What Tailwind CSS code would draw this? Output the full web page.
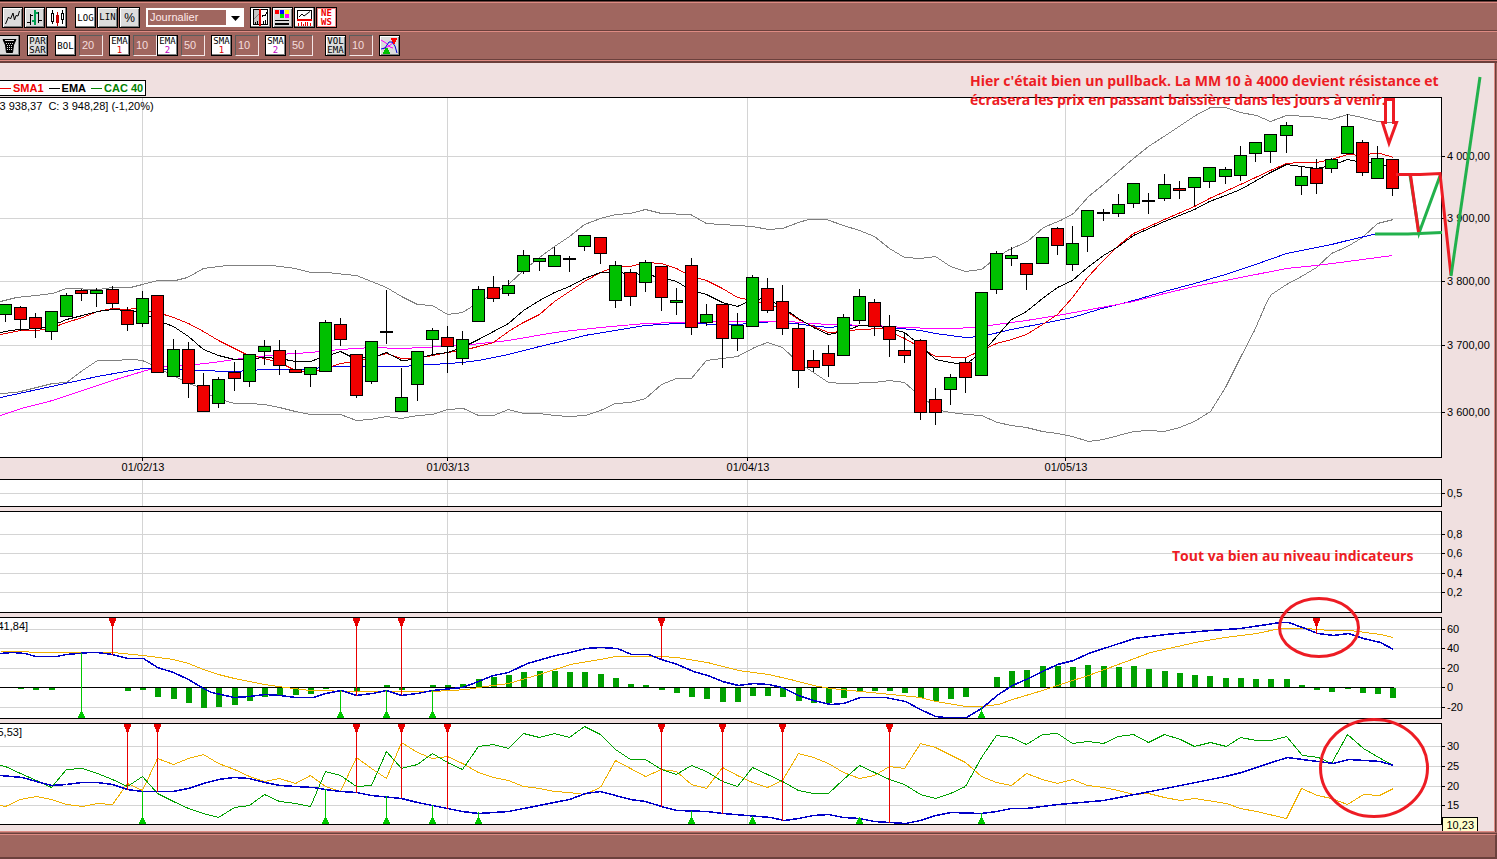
<!DOCTYPE html>
<html lang="fr">

<head>
    <meta charset="UTF-8" />
    <meta name="viewport" content="width=device-width, initial-scale=1.0" />
    <title>CAC 40 - Journalier</title>
    <script src="https://cdn.jsdelivr.net/npm/@tailwindcss/browser@4"></script>
</head>

<body class="flex min-h-screen flex-col overflow-x-hidden bg-[#a0665f] font-['Liberation_Sans',sans-serif] text-[11px] text-black">

<!-- Toolbars -->
<header class="border-t border-black bg-[#6b403c] pt-px">
    <div class="flex h-[29px] items-center border-t border-b border-t-[#de8b83] border-b-[#6b403c] bg-[#a0665f] pt-0.5 pl-0.5">
        <div class="flex gap-px">
            <button aria-label="Courbe" class="h-[21px] w-[21px] border border-black bg-[#dcdcdc] shadow-[inset_1px_1px_0_#fff,inset_-1px_-1px_0_#808080]">
                <svg width="19" height="19" fill="none" stroke="#000"><path d="M2.5 16L5.5 9L7.5 11L10 5L11.500 12L13 7.500L15 8L16.500 3" /></svg>
            </button>
            <button aria-label="Bar chart" class="h-[21px] w-[21px] border border-black bg-[#dcdcdc] shadow-[inset_1px_1px_0_#fff,inset_-1px_-1px_0_#808080]">
                <svg width="19" height="19" fill="none" stroke="#000" shape-rendering="crispEdges"><path d="M2 14.500h3M5.500 6v11M6 7.500h2M13.500 4v11M11 5.500h2M14 12.500h3" /><path d="M10 2v15M7 12.500h2M11 4.500h2" stroke="#00a050" stroke-width="2" /></svg>
            </button>
            <button aria-label="Chandeliers" class="h-[21px] w-[21px] border border-black bg-white shadow-[inset_-1px_-1px_0_#808080]">
                <svg width="19" height="19" fill="#fff" stroke="#000" shape-rendering="crispEdges"><path d="M5.500 2v14M15.500 2v14" /><rect x="4.500" y="5.500" width="2" height="8" /><rect x="14.500" y="5.500" width="2" height="6" /><path d="M10.500 4v14" stroke="#c00000" /><rect x="9.500" y="7.500" width="2" height="7" fill="#e00000" stroke="#c00000" /></svg>
            </button>
        </div>
        <div class="ml-2 flex gap-px font-['DejaVu_Sans_Mono',monospace] text-[9px]">
            <button class="h-[21px] w-[21px] border border-black bg-white pt-0.5 shadow-[inset_-1px_-1px_0_#808080]">LOG</button>
            <button class="h-[21px] w-[21px] border border-black bg-[#dcdcdc] shadow-[inset_1px_1px_0_#fff,inset_-1px_-1px_0_#808080]">LIN</button>
            <button class="h-[21px] w-[21px] border border-black bg-[#dcdcdc] font-['Liberation_Sans',sans-serif] text-[12px] shadow-[inset_1px_1px_0_#fff,inset_-1px_-1px_0_#808080]">%</button>
        </div>
        <div class="relative ml-1.5 h-[19px] w-[98px]">
            <select aria-label="Période" class="h-[19px] w-[98px] appearance-none border-2 border-r-[18px] border-white bg-[#a0665f] pl-0.5 leading-none text-[#ffe8e8]">
                <option>Journalier</option>
                <option>Hebdomadaire</option>
                <option>Mensuel</option>
            </select>
            <svg class="pointer-events-none absolute top-2 right-1" width="9" height="5"><path d="M0 0h9L4.500 5z" /></svg>
        </div>
        <div class="ml-1.5 flex gap-px">
            <button aria-label="Curseur" class="h-[21px] w-[21px] border border-black bg-white shadow-[inset_-1px_-1px_0_#808080]">
                <svg width="19" height="19" fill="none" stroke="#000" shape-rendering="crispEdges"><rect x="2.500" y="1.500" width="6" height="15" fill="#c4c4c4" /><rect x="2.500" y="1.500" width="14" height="15" /><path d="M3 11L8 6" stroke="#808080" /><path d="M11 9L12 7L14 8L16 4" /><path d="M4.500 14v2M6.500 13v3M12.500 13v3M14.500 12v4" /><path d="M9 1v17" stroke="#e00000" stroke-width="2" /></svg>
            </button>
            <button aria-label="Couleurs" class="h-[21px] w-[21px] border border-black bg-[#dcdcdc] shadow-[inset_1px_1px_0_#fff,inset_-1px_-1px_0_#808080]">
                <svg width="19" height="19" shape-rendering="crispEdges"><path d="M2 2h4v4H2z" fill="#f00" /><path d="M7 2h4v4H7z" fill="#00f" /><path d="M12 2h4v4h-4z" fill="#ff0" /><path d="M7 6h4v4H7z" fill="#00e000" /><path d="M12 6h4v4h-4z" fill="#f0f" /><path d="M2 12h14v1H2zM2 15h14v2H2z" /></svg>
            </button>
            <button aria-label="Indicateurs" class="h-[21px] w-[21px] border border-black bg-white shadow-[inset_-1px_-1px_0_#808080]">
                <svg width="19" height="19" fill="none" stroke="#000"><path d="M2.500 12V2.500h14V12" shape-rendering="crispEdges" /><path d="M4 9L7 6L9 8L15 3.500" /><path d="M2 12h15" stroke="#f00000" stroke-width="2" shape-rendering="crispEdges" /><path d="M3.500 15v3M6.500 14v4M8.500 16v2M10.500 14v4M12.500 14v4M15.500 15v3" stroke="#f00000" shape-rendering="crispEdges" /></svg>
            </button>
            <button class="h-[21px] w-[21px] border border-black bg-white font-['DejaVu_Sans_Mono',monospace] text-[9px] leading-[9px] font-bold text-[#f00000] shadow-[inset_1px_1px_0_#f08080,inset_-1px_-1px_0_#f08080]">NE<br>WS</button>
        </div>
    </div>
    <div class="flex h-[29px] items-center border-t border-b border-t-[#de8b83] border-b-[#6b403c] bg-[#a0665f]">
        <button aria-label="Corbeille" class="h-[21px] w-5 border border-l-0 border-black bg-[#dcdcdc] shadow-[inset_-1px_-1px_0_#808080]">
            <svg width="19" height="19" stroke="#000"><path d="M3 3.500h13L13.500 9L12.500 16.500h-6L5.500 9z" fill="#000" /><path d="M5 4.500h9" stroke="#dcdcdc" stroke-width="1" /><path d="M6 7.500h7M7 9.500h6M7 11.500h5M7 13.500h5" stroke="#dcdcdc" stroke-dasharray="1 1" /></svg>
        </button>
        <button class="ml-[7px] h-[21px] w-[21px] border border-black bg-[#dcdcdc] font-['DejaVu_Sans_Mono',monospace] text-[9px] leading-[9px] shadow-[inset_1px_1px_0_#fff,inset_-1px_-1px_0_#808080]">PAR<br>SAR</button>
        <div class="ml-[7px] flex gap-[3px]">
            <button class="h-[21px] w-[21px] border border-black bg-white pt-0.5 font-['DejaVu_Sans_Mono',monospace] text-[9px] shadow-[inset_-1px_-1px_0_#808080]">BOL</button>
            <input aria-label="BOL" value="20" class="h-[21px] w-6 border border-t-[#5c5c5c] border-r-[#f4e6e6] border-b-[#f4e6e6] border-l-[#5c5c5c] pb-0.5 pl-0.5 text-[#f4dcdc]" />
        </div>
        <div class="ml-1.5 flex gap-[3px]">
            <button class="h-[21px] w-[21px] border border-black bg-white font-['DejaVu_Sans_Mono',monospace] text-[9px] leading-[9px] shadow-[inset_-1px_-1px_0_#808080]">EMA<br><span class="text-[#e00000]">1</span></button>
            <input aria-label="EMA 1" value="10" class="h-[21px] w-6 border border-t-[#5c5c5c] border-r-[#f4e6e6] border-b-[#f4e6e6] border-l-[#5c5c5c] pb-0.5 pl-0.5 text-[#f4dcdc]" />
        </div>
        <div class="flex gap-[3px]">
            <button class="h-[21px] w-[21px] border border-black bg-white font-['DejaVu_Sans_Mono',monospace] text-[9px] leading-[9px] shadow-[inset_-1px_-1px_0_#808080]">EMA<br><span class="text-[#c000c0]">2</span></button>
            <input aria-label="EMA 2" value="50" class="h-[21px] w-6 border border-t-[#5c5c5c] border-r-[#f4e6e6] border-b-[#f4e6e6] border-l-[#5c5c5c] pb-0.5 pl-0.5 text-[#f4dcdc]" />
        </div>
        <div class="ml-1.5 flex gap-[3px]">
            <button class="h-[21px] w-[21px] border border-black bg-white font-['DejaVu_Sans_Mono',monospace] text-[9px] leading-[9px] shadow-[inset_-1px_-1px_0_#808080]">SMA<br><span class="text-[#e00000]">1</span></button>
            <input aria-label="SMA 1" value="10" class="h-[21px] w-6 border border-t-[#5c5c5c] border-r-[#f4e6e6] border-b-[#f4e6e6] border-l-[#5c5c5c] pb-0.5 pl-0.5 text-[#f4dcdc]" />
        </div>
        <div class="ml-1.5 flex gap-[3px]">
            <button class="h-[21px] w-[21px] border border-black bg-white font-['DejaVu_Sans_Mono',monospace] text-[9px] leading-[9px] shadow-[inset_-1px_-1px_0_#808080]">SMA<br><span class="text-[#c000c0]">2</span></button>
            <input aria-label="SMA 2" value="50" class="h-[21px] w-6 border border-t-[#5c5c5c] border-r-[#f4e6e6] border-b-[#f4e6e6] border-l-[#5c5c5c] pb-0.5 pl-0.5 text-[#f4dcdc]" />
        </div>
        <div class="ml-3 flex gap-[3px]">
            <button class="h-[21px] w-[21px] border border-black bg-[#dcdcdc] font-['DejaVu_Sans_Mono',monospace] text-[9px] leading-[9px] shadow-[inset_1px_1px_0_#fff,inset_-1px_-1px_0_#808080]">VOL<br>EMA</button>
            <input aria-label="Volume EMA" value="10" class="h-[21px] w-6 border border-t-[#5c5c5c] border-r-[#f4e6e6] border-b-[#f4e6e6] border-l-[#5c5c5c] pb-0.5 pl-0.5 text-[#f4dcdc]" />
        </div>
        <button aria-label="Signaux" class="ml-1.5 h-[21px] w-[21px] border border-black bg-[#dcdcdc] shadow-[inset_1px_1px_0_#fff,inset_-1px_-1px_0_#808080]">
            <svg width="19" height="19" fill="none"><path d="M1 4L6 7L10 11L13 12M3 13L9 10L14 6" stroke="#f0f" /><path d="M1 13L5 12L9 6L12 6L15 10L17 17" stroke="#0000e0" /><path d="M11 2h6v2h-1v2h-1v2h-2V6h-1V4h-1z" fill="#f00" /><path d="M3 18h7v-2H9v-2H8v-2H5v2H4v2H3z" fill="#00c000" /></svg>
        </button>
    </div>
    <div class="h-[3px] border-t border-[#de8b83]"></div>
</header>

<!-- Charts -->
<main class="relative mr-0.5 border-r border-b border-r-[#de8b83] border-b-[#de8b83] bg-[#f0e0e0] pb-1.5 shadow-[1px_0_0_#6b403c]">
    <div class="flex pt-[17px] pb-px font-bold">
        <div class="flex h-4 items-center gap-0.5 border border-l-0 border-black bg-white pr-0.5">
            <span class="h-px w-[11px] bg-[#f00000]"></span><span class="mr-[3px] text-[#f00000]">SMA1</span>
            <span class="h-px w-[11px] bg-black"></span><span class="mr-[3px]">EMA</span>
            <span class="h-px w-[11px] bg-[#008000]"></span><span class="text-[#008000]">CAC 40</span>
        </div>
    </div>

    <section class="flex h-[361px]">
        <svg id="price" class="h-full min-w-0 flex-1 border-y border-r border-black bg-white"></svg>
        <svg id="priceAxis" class="h-full w-[52px] overflow-visible"></svg>
    </section>
    <svg id="dates" class="h-[21px] w-full"></svg>
    <section class="mb-1 flex h-7">
        <svg id="empty1" class="h-full min-w-0 flex-1 border-y border-r border-black bg-white"></svg>
        <svg id="empty1Axis" class="h-full w-[52px] overflow-visible"></svg>
    </section>
    <section class="mb-1 flex h-[102px]">
        <svg id="empty2" class="h-full min-w-0 flex-1 border-y border-r border-black bg-white"></svg>
        <svg id="empty2Axis" class="h-full w-[52px] overflow-visible"></svg>
    </section>
    <section class="mb-1 flex h-[102px]">
        <svg id="macd" class="h-full min-w-0 flex-1 border-y border-r border-black bg-white"></svg>
        <svg id="macdAxis" class="h-full w-[52px] overflow-visible"></svg>
    </section>
    <section class="flex h-[102px]">
        <svg id="dmi" class="h-full min-w-0 flex-1 border-y border-r border-black bg-white"></svg>
        <svg id="dmiAxis" class="h-full w-[52px] overflow-visible"></svg>
    </section>

    <output class="absolute right-4 bottom-0 h-3.5 border border-b-0 border-black bg-[#ffffcc] px-[3px] leading-[14px]">10,23</output>

    <!-- Hand-drawn notes over the charts -->
    <svg class="pointer-events-none absolute inset-0 h-full w-full overflow-visible" fill="none" stroke="#ed1c24" stroke-width="3">
        <g transform="translate(0,-63)">
            <path d="M1385.500 99.500h8v23h3L1389 143L1382.500 122.500h3z" />
            <path d="M1410 175L1419 233L1440 176M1375 234H1408L1442 232.500" stroke="#22b14c" />
            <path d="M1396 174.500H1420L1440 173.500L1451 275M1410.500 175L1418.500 232" />
            <path d="M1451 276L1480 77" stroke="#22b14c" />
            <ellipse cx="1319" cy="627.500" rx="39.500" ry="29" />
            <ellipse cx="1374" cy="768" rx="53.500" ry="48.500" />
            <g fill="#ed1c24" stroke="none" class="font-['Open_Sans',sans-serif] text-[14px] font-bold">
                <text x="970" y="86">Hier c'était bien un pullback. La MM 10 à 4000 devient résistance et</text>
                <text x="970" y="105">écrasera les prix en passant baissière dans les jours à venir.</text>
                <text x="1172" y="561">Tout va bien au niveau indicateurs</text>
            </g>
        </g>
    </svg>
</main>

<footer class="flex flex-1 flex-col bg-[#a0665f]">
    <div class="h-0.5 border-b border-[#6b403c]"></div>
    <div class="min-h-6 flex-1 border-t border-r-2 border-b-2 border-t-[#de8b83] border-r-[#6b403c] border-b-[#6b403c]"></div>
</footer>

<script>
    const months = [[142, "01/02/13"], [447, "01/03/13"], [747, "01/04/13"], [1065, "01/05/13"]];

    // x, high, body top, body bottom, low, colour (g, r, or k when open = close)
    const candles = [
      [5,304,304,314,321,"g"],[20,305,307,319,330,"r"],[35,312,317,328,337,"r"],[51,311,311,331,339,"g"],[66,292,295,316,316,"g"],
      [81,288,290,293,300,"r"],[96,287,290,293,306,"g"],[112,285,289,303,307,"r"],[127,306,310,324,330,"r"],[142,290,298,323,326,"g"],
      [157,295,295,372,372,"r"],[173,338,349,376,376,"g"],[188,341,349,383,397,"r"],[203,372,385,411,411,"r"],[218,376,379,403,407,"g"],
      [234,361,372,378,390,"r"],[249,354,354,381,386,"g"],[264,339,346,351,364,"g"],[279,339,350,365,374,"r"],[295,349,369,372,372,"r"],
      [310,366,367,374,386,"g"],[325,319,322,371,371,"g"],[340,317,324,339,345,"r"],[356,353,354,395,397,"r"],[371,341,341,381,383,"g"],
      [386,289,331,332,343,"k"],[401,367,397,411,411,"g"],[417,350,351,384,400,"g"],[432,327,330,339,355,"g"],[447,325,337,346,372,"r"],
      [462,330,339,358,364,"g"],[478,285,289,321,321,"g"],[493,275,287,298,301,"r"],[508,279,285,293,295,"g"],[523,249,255,271,273,"g"],
      [539,257,258,261,270,"g"],[554,246,255,266,266,"g"],[569,255,258,259,271,"k"],[584,235,235,246,250,"g"],[600,237,237,253,263,"r"],
      [615,260,265,300,307,"g"],[630,268,272,296,305,"r"],[645,259,262,282,291,"g"],[661,266,266,297,310,"r"],[676,287,300,302,314,"g"],
      [691,257,265,327,334,"r"],[706,303,314,322,325,"g"],[722,303,304,338,367,"r"],[737,312,325,338,350,"g"],[752,274,277,326,326,"g"],
      [767,277,288,310,312,"r"],[782,284,301,328,334,"r"],[798,322,328,370,387,"r"],[813,349,360,367,371,"r"],[828,344,353,365,376,"r"],
      [843,313,317,355,355,"g"],[859,288,296,320,323,"g"],[874,298,302,326,335,"r"],[889,314,326,339,356,"r"],[904,331,350,355,362,"r"],
      [920,338,340,412,419,"r"],[935,387,399,412,424,"r"],[950,373,377,389,404,"g"],[965,357,362,377,392,"r"],[981,292,292,375,375,"g"],
      [996,250,253,289,293,"g"],[1011,246,255,258,265,"g"],[1026,263,263,274,289,"r"],[1042,236,237,263,263,"g"],[1057,226,228,245,254,"r"],
      [1072,225,243,264,270,"g"],[1087,209,210,236,251,"g"],[1103,208,212,213,220,"k"],[1118,193,204,213,216,"g"],[1133,182,183,203,207,"g"],
      [1148,192,200,201,213,"k"],[1164,173,184,198,200,"g"],[1179,180,188,190,198,"r"],[1194,177,177,187,205,"g"],[1209,167,167,181,187,"g"],
      [1225,166,169,176,183,"g"],[1240,145,155,175,180,"g"],[1255,142,142,153,161,"g"],[1270,134,134,151,162,"g"],[1286,121,125,135,152,"g"],
      [1301,165,176,185,194,"g"],[1316,158,168,183,193,"r"],[1331,157,159,168,172,"g"],[1347,113,126,153,153,"g"],[1362,139,142,172,175,"r"],
      [1377,145,158,178,178,"g"],[1392,159,159,188,195,"r"]
    ];

    const bollUp = "0,301 16,297 36,295 52,293 66,288 98,289 112,287 130,287 142,284 157,280 175,280 187,277 203,268 226,265 272,265 295,268 310,272 327,272 345,274 356,275 371,281 386,287 401,296 417,304 432,305 447,314 462,312 478,302 493,293 508,284 523,270 539,257 554,246 569,236 584,224 600,218 615,214 630,213 645,209 661,213 690,214 706,223 737,225 752,226 768,229 782,228 798,222 808,219 826,219 843,225 859,230 874,236 889,248 904,257 920,258 935,256 950,266 965,271 981,269 991,261 1007,250 1027,241 1043,227 1060,220 1073,213 1088,196 1103,184 1118,171 1133,158 1148,146 1165,135 1195,115 1210,107 1225,107 1240,112 1256,115 1270,121 1286,115 1310,116 1331,119 1347,114 1362,117 1377,121 1393,122";
    const bollLow = "0,393 16,392 36,387 52,383 66,382 82,370 97,360 112,360 132,359 142,360 157,367 188,383 197,386 212,396 227,401 234,403 249,403 264,404 279,407 295,411 310,414 340,414 356,420 370,419 386,416 401,418 417,415 432,414 447,409 463,408 478,415 493,415 508,409 523,413 539,413 554,415 569,416 585,415 600,410 615,403 630,402 645,398 661,384 676,378 691,378 706,360 722,358 737,356 754,347 767,342 782,347 798,362 813,372 828,382 843,383 874,382 889,380 904,382 912,389 930,403 943,411 951,412 966,414 981,415 997,422 1011,425 1026,427 1042,431 1057,433 1072,436 1088,441 1103,439 1118,435 1133,431 1148,430 1164,431 1179,427 1194,421 1210,411 1225,387 1240,357 1254,330 1267,300 1271,294 1286,284 1301,276 1316,267 1331,253 1347,246 1362,237 1377,223 1393,219";
    const sma1 = "0,334 20,330 37,330 52,327 66,322 82,317 97,311 112,308 127,309 135,308 157,312 173,317 188,323 203,331 218,340 234,348 246,354 264,358 279,362 295,370 310,372 328,367 340,363 356,361 371,357 378,355 386,353 401,358 415,358 432,355 447,352 462,350 478,346 493,342 508,331 523,322 539,314 554,301 569,291 584,281 600,272 615,266 630,266 645,262 661,263 676,268 691,276 706,280 722,288 737,297 752,300 767,304 782,308 798,319 813,326 828,332 843,331 859,329 882,328 889,331 904,338 920,347 935,356 965,357 981,350 996,343 1011,339 1026,334 1042,324 1057,314 1072,297 1087,277 1100,263 1118,245 1133,233 1164,219 1194,206 1209,198 1240,184 1270,170 1286,163 1300,162 1316,162 1331,159 1347,154 1362,155 1372,153 1380,153 1393,157";
    const ema1 = "0,332 10,330 20,329 37,328 52,325 66,319 82,315 97,311 112,309 127,310 142,312 157,320 165,323 173,326 188,336 203,349 218,355 234,359 244,359 264,357 279,358 295,361 310,361 318,358 340,351 350,356 360,358 371,355 378,355 386,352 401,360 415,359 432,354 447,352 462,347 478,339 493,331 508,323 523,310 539,300 554,292 569,286 584,278 600,272 615,272 630,273 645,274 661,277 676,281 691,290 706,294 722,302 737,306 752,299 767,298 782,307 798,318 813,327 828,334 843,331 859,325 874,325 889,328 904,332 920,345 935,359 950,362 965,364 981,352 990,343 1011,319 1026,311 1042,298 1057,287 1072,280 1087,267 1103,255 1118,246 1133,235 1164,221 1194,209 1209,201 1225,195 1240,189 1270,172 1286,164 1301,166 1316,168 1331,165 1347,159 1357,161 1377,163 1392,167";
    const ema2 = "0,397 97,376 142,368 180,369 195,370 234,371 264,369 310,369 325,366 401,366 447,363 462,362 478,360 493,357 508,354 539,346 569,339 584,335 615,330 645,325 676,323 737,324 760,322 775,321 828,327 850,325 874,325 900,328 920,330 935,333 965,337 981,336 1011,329 1042,323 1072,317 1098,309 1133,300 1164,291 1194,283 1225,274 1255,264 1286,253 1301,250 1331,244 1347,240 1377,233";
    const sma2 = "0,415 21,408 52,400 97,385 112,380 142,371 157,367 173,365 195,364 213,362 234,359 249,357 279,354 310,352 340,349 371,347 401,348 462,345 508,340 554,332 600,327 645,323 676,322 737,321 790,321 798,322 828,324 874,325 904,327 935,328 957,328 981,326 996,324 1026,320 1057,315 1090,309 1133,301 1164,293 1194,286 1225,280 1286,268 1316,265 1347,261 1392,255";

    const macdLine = "0,653 12,652 25,653 35,656 56,656 66,654 90,652 97,652 112,654 127,658 143,658 157,667 173,672 188,679 203,688 211,692 234,697 249,696 264,694 280,695 295,697 313,697 325,693 341,690 356,695 372,693 386,690 401,695 417,693 432,690 462,687 478,681 493,675 508,672 527,663 555,655 570,652 585,648 600,647 617,648 631,654 648,654 661,659 677,664 693,671 707,675 722,681 738,685 753,683 768,684 782,687 798,695 813,700 830,704 843,703 860,697 885,697 905,701 920,709 935,716 945,717 966,717 981,708 998,694 1012,685 1028,678 1042,671 1057,664 1073,660 1088,653 1134,638 1165,634 1210,630 1240,628 1280,622 1288,622 1302,627 1317,633 1333,635 1348,633 1363,638 1380,642 1393,649";
    const macdSignal = "0,651 28,651 29,652 112,652 143,655 173,659 188,663 203,669 218,674 234,678 264,684 285,687 310,690 356,691 432,691 467,689 485,686 508,683 539,674 570,664 600,659 615,656 661,656 676,657 707,662 738,670 768,674 790,679 813,685 830,688 860,691 890,694 920,697 935,701 966,706 981,706 998,704 1012,699 1042,690 1066,682 1088,675 1134,658 1150,652 1195,642 1225,637 1256,633 1280,628 1305,628 1330,630 1350,630 1380,634 1393,637";
    const histogram = [[21,-1],[36,-2],[52,-2],[128,-3],[143,-2],[158,-9],[174,-11],[189,-15],[204,-20],[219,-19],[235,-17],[250,-13],[265,-9],[280,-8],[296,-7],[311,-6],[326,-1],[357,-4],[387,2],[402,-2],[433,2],[448,2],[463,3],[479,8],[494,10],[509,12],[524,15],[540,16],[555,16],[570,15],[585,15],[601,13],[616,9],[631,3],[646,2],[662,-2],[677,-5],[692,-9],[707,-11],[723,-14],[738,-14],[753,-8],[768,-8],[783,-9],[799,-13],[814,-15],[829,-15],[844,-10],[860,-3],[875,-3],[890,-3],[905,-5],[921,-10],[936,-13],[951,-11],[966,-9],[997,10],[1012,16],[1027,17],[1043,21],[1058,21],[1073,20],[1088,22],[1104,21],[1119,20],[1134,21],[1149,18],[1165,16],[1180,14],[1195,12],[1210,11],[1226,9],[1241,9],[1256,8],[1271,8],[1287,8],[1302,2],[1317,-2],[1332,-4],[1348,-1],[1363,-5],[1378,-6],[1393,-10]];

    const diPlus = "0,765 5,766 20,773 36,780 51,787 66,769 82,768 97,773 112,779 127,786 142,776 157,793 173,801 188,808 203,813 218,817 234,807 249,805 264,794 279,801 295,803 310,806 325,771 340,775 356,786 371,785 386,751 401,768 417,764 432,753 447,762 462,769 478,746 493,744 508,748 523,733 539,737 554,733 569,737 584,726 600,734 615,749 630,759 645,759 661,769 676,774 691,765 706,771 722,781 737,786 752,767 782,781 798,790 813,793 828,793 843,779 859,765 889,779 904,784 920,794 935,798 950,793 965,786 981,757 996,735 1011,737 1026,744 1042,734 1057,733 1072,743 1087,741 1103,743 1118,736 1133,734 1148,742 1164,734 1180,739 1194,746 1210,742 1226,746 1240,737 1256,740 1271,740 1286,736 1302,755 1318,757 1331,763 1347,734 1363,748 1380,758 1393,765";
    const diMinus = "0,805 5,806 20,799 36,796 51,799 66,804 82,806 97,803 112,804 127,783 142,790 157,758 173,764 188,758 203,754 218,763 234,769 249,776 264,781 279,778 295,783 310,775 325,786 340,791 356,757 371,768 386,778 401,742 417,752 432,758 447,756 462,763 478,772 493,777 508,780 523,786 539,788 554,791 569,792 584,794 600,787 615,760 630,768 645,776 661,769 676,771 691,784 706,788 722,767 737,775 752,782 767,787 782,780 798,753 813,757 828,763 843,772 859,778 874,775 889,766 904,768 920,743 935,747 965,762 981,776 996,782 1011,785 1026,773 1042,779 1057,783 1072,779 1087,785 1103,787 1118,790 1133,794 1148,793 1164,797 1180,800 1194,798 1226,803 1240,808 1256,811 1286,818 1301,788 1317,795 1331,798 1347,804 1363,794 1379,795 1393,788";
    const adx = "0,775 22,777 36,781 51,785 66,784 82,782 97,782 112,784 127,789 142,791 172,791 188,788 203,783 218,779 234,777 249,778 264,782 280,785 295,786 313,787 325,789 340,791 356,792 371,795 401,798 417,802 447,808 462,811 478,813 508,811 569,799 585,793 600,791 615,795 630,799 645,801 661,806 676,810 707,811 722,813 770,817 784,820 798,818 813,815 828,814 843,817 859,818 874,821 905,823 920,820 935,815 951,812 981,813 996,811 1011,808 1026,808 1058,804 1103,800 1134,794 1150,791 1180,785 1225,776 1241,772 1271,762 1287,757 1302,759 1333,763 1348,759 1380,761 1393,765";

    const line = (points, color, width = 1) =>
      `<polyline points="${points}" fill="none" stroke="${color}" stroke-width="${width}" />`;

    const sell = (x, top, y) => `
      <path d="M${x} ${top + 1}V${y}" stroke="#e80000" />
      <path d="M${x - 3.5} ${top + 0.5}h7v3h-1v2h-1v3h-3v-3h-1v-2h-1z" fill="#e80000" />`;

    const buy = (x, bottom, y) => `
      <path d="M${x} ${y}V${bottom - 1}" stroke="#00c800" />
      <path d="M${x - 3.5} ${bottom - 0.5}h7v-2h-1v-2h-1v-2h-3v2h-1v2h-1z" fill="#00c800" />`;

    // Draws a plot whose frame starts at "top", with its scale on the right
    function drawPanel(id, top, ticks, content) {
      const grid = months.map(([x]) => `<path d="M${x} 0V900" />`).join("") +
        ticks.map(([y]) => `<path d="M-1 ${y}H4000" />`).join("");
      document.getElementById(id).innerHTML = `
        <g transform="translate(0.5,${-top - 0.5})" shape-rendering="crispEdges">
          <g stroke="#d4d4d4">${grid}</g>
          ${content}
        </g>`;
      document.getElementById(id + "Axis").innerHTML = ticks.map(([y, label]) => `
        <path d="M0 ${y - top + 0.5}h3" stroke="#000" />
        <text x="5" y="${y - top + 4}">${label}</text>`).join("");
    }

    const fills = { g: "#00c000", r: "#f00000", k: "#000000" };
    const candleShapes = candles.map(([x, high, open, close, low, c]) => `
      <path d="M${x} ${high}V${low + 0.5}" stroke="#000" />
      <rect x="${x - 6}" y="${open}" width="12" height="${close - open}" fill="${fills[c]}" stroke="#000" />`).join("");

    drawPanel("price", 97, [[156, "4 000,00"], [218, "3 900,00"], [281, "3 800,00"], [345, "3 700,00"], [412, "3 600,00"]],
      line(bollUp, "#808080") + line(bollLow, "#808080") + line(ema2, "#0000e8") + line(sma2, "#ff00ff") +
      line(sma1, "#e80000") + line(ema1, "#000000") + candleShapes +
      `<text x="-1" y="109">3 938,37 &#160;C: 3 948,28] (-1,20%)</text>`);

    drawPanel("empty1", 479, [[493, "0,5"]], "");
    drawPanel("empty2", 511, [[534, "0,8"], [553, "0,6"], [573, "0,4"], [592, "0,2"]], "");

    drawPanel("macd", 617, [[629, "60"], [648, "40"], [668, "20"], [687, "0"], [707, "-20"]],
      histogram.map(([x, v]) => `<rect x="${x - 3.5}" y="${v > 0 ? 686.5 - v : 687.5}" width="6" height="${Math.abs(v)}" fill="#00a000" />`).join("") +
      `<path d="M-1 687H1393" stroke="#000" />` +
      line(macdSignal, "#f0b000") + line(macdLine, "#0000c8", 1.5) +
      [[112, 654], [356, 695], [401, 694], [661, 658], [1316, 633]].map(([x, y]) => sell(x, 617, y)).join("") +
      [[81, 652], [340, 689], [386, 689], [432, 689], [981, 706]].map(([x, y]) => buy(x, 718, y)).join("") +
      `<text x="-3" y="629">41,84]</text>`);

    drawPanel("dmi", 723, [[746, "30"], [766, "25"], [786, "20"], [805, "15"]],
      line(diMinus, "#f0b000") + line(diPlus, "#00a000") + line(adx, "#0000c8", 1.5) +
      [[127, 789], [157, 791], [356, 792], [401, 797], [447, 808], [661, 806], [722, 813], [782, 820], [889, 822]].map(([x, y]) => sell(x, 723, y)).join("") +
      [[142, 790], [325, 788], [386, 795], [432, 804], [478, 811], [691, 810], [752, 815], [859, 816], [981, 812]].map(([x, y]) => buy(x, 824, y)).join("") +
      `<text x="-3" y="735">5,53]</text>`);

    document.getElementById("dates").innerHTML = months.map(([x, label]) => `
      <path d="M${x + 0.5} 0v3" stroke="#000" />
      <text x="${x + 1}" y="13" text-anchor="middle">${label}</text>`).join("");
</script>
</body>

</html>
